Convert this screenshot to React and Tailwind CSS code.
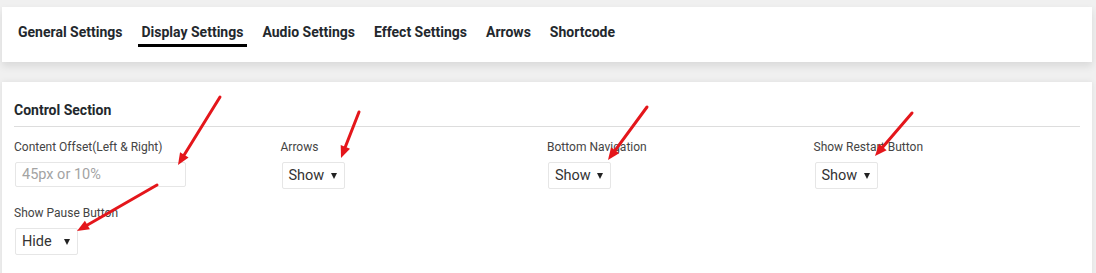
import React from "react";

const tabs = ["General Settings", "Display Settings", "Audio Settings", "Effect Settings", "Arrows", "Shortcode"];

function Select({ value }) {
  return (
    <div className="w-[63px] h-[27px] flex items-center justify-between pl-[6px] pr-[7px] border border-[#e6e6e6] rounded-[2px] bg-white text-[14.5px] text-[#333]">
      <span>{value}</span>
      <span className="w-0 h-0 border-l-[3.5px] border-r-[3.5px] border-t-[6px] border-l-transparent border-r-transparent border-t-[#222]" />
    </div>
  );
}

function Field({ label, children }) {
  return (
    <div className="flex flex-col items-start">
      <div className="text-[12px] leading-[16px] text-[#444] mb-[7px]">{label}</div>
      {children}
    </div>
  );
}

function Arrow({ x1, y1, x2, y2 }) {
  const dx = x2 - x1;
  const dy = y2 - y1;
  const len = Math.hypot(dx, dy);
  const ux = dx / len;
  const uy = dy / len;
  const hl = 12;
  const hw = 5;
  const bx = x2 - ux * hl;
  const by = y2 - uy * hl;
  const px = -uy * hw;
  const py = ux * hw;
  return (
    <g>
      <line x1={x1} y1={y1} x2={bx} y2={by} stroke="#e4161b" strokeWidth="3" strokeLinecap="round" />
      <polygon points={`${x2},${y2} ${bx + px},${by + py} ${bx - px},${by - py}`} fill="#e4161b" />
    </g>
  );
}

export default function App() {
  return (
    <div className="relative w-[1096px] h-[273px] overflow-hidden bg-[#f0f0f0] font-['Roboto',sans-serif]">
      <div className="pt-[7px] pl-[2px] pr-[4px]">
        <div className="h-[55px] bg-white shadow-[0_4px_8px_rgba(0,0,0,0.10)] flex items-start pl-[12px] gap-[11px]">
          {tabs.map((t, i) => (
            <div
              key={t}
              className={
                "px-[4px] pt-[15px] pb-[2px] border-b-[3px] text-[14px] leading-[20px] font-bold text-[#23282d] " +
                (i === 1 ? "border-black" : "border-transparent")
              }
            >
              {t}
            </div>
          ))}
        </div>
        <div className="mt-[20px] h-[200px] bg-white shadow-[0_0_6px_rgba(0,0,0,0.08)] px-[12px] pt-[18px]">
          <div className="text-[14px] leading-[20px] font-bold text-[#23282d] pb-[6px] border-b border-[#dddddd]">
            Control Section
          </div>
          <div className="grid grid-cols-4 pt-[12px] gap-y-[16px]">
            <Field label="Content Offset(Left & Right)">
              <div className="w-[171px] h-[25px] ml-[1px] flex items-center pl-[6px] border border-[#e6e6e6] rounded-[2px] text-[14.5px] text-[#a3a3a3]">
                45px or 10%
              </div>
            </Field>
            <Field label="Arrows">
              <div className="ml-[1px]"><Select value="Show" /></div>
            </Field>
            <Field label="Bottom Navigation">
              <div className="ml-[1px]"><Select value="Show" /></div>
            </Field>
            <Field label="Show Restart Button">
              <div className="ml-[1px]"><Select value="Show" /></div>
            </Field>
            <Field label="Show Pause Button">
              <div className="ml-[1px]"><Select value="Hide" /></div>
            </Field>
          </div>
        </div>
      </div>
      <svg className="absolute left-0 top-0 pointer-events-none" width="1096" height="273" viewBox="0 0 1096 273">
        <Arrow x1={220} y1={97} x2={178} y2={165} />
        <Arrow x1={359} y1={112} x2={341} y2={158} />
        <Arrow x1={647} y1={107} x2={608} y2={160} />
        <Arrow x1={912} y1={113} x2={875} y2={156} />
        <Arrow x1={157} y1={185} x2={77} y2={231} />
      </svg>
    </div>
  );
}
